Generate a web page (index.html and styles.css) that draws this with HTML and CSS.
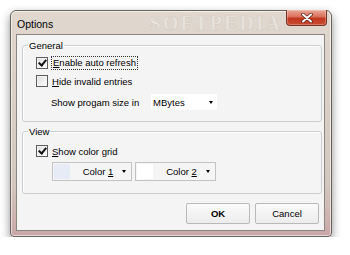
FILE: index.html
```html
<!DOCTYPE html>
<html lang="en">
<head>
  <meta charset="UTF-8" />
  <title>Options</title>
  <link rel="stylesheet" href="styles.css">
</head>
<body>

<div class="window">
  <div class="titlebar">
    <span class="title">Options</span>
    <span class="wm">SOFTPEDIA</span>
    <button class="close" title="Close">
      <svg width="14" height="10" viewBox="0 0 14 10">
        <path d="M3 1.5 L11 8.5 M11 1.5 L3 8.5" stroke="#5a2418" stroke-width="3.6" stroke-linecap="round" />
        <path d="M3 1.5 L11 8.5 M11 1.5 L3 8.5" stroke="#fff" stroke-width="2" stroke-linecap="round" />
      </svg>
    </button>
  </div>

  <div class="client">
    <div class="group general">
      <div class="group-title">General</div>
      <label class="row check">
        <span class="box checked"></span>
        <span class="focus"><u>E</u>nable auto refresh</span>
      </label>
      <label class="row check">
        <span class="box"></span>
        <span><u>H</u>ide invalid entries</span>
      </label>
      <div class="row size-row">
        <span class="size-label">Show progam size in</span>
        <div class="combo">
          <span class="combo-text">MBytes</span>
          <span class="arrow"></span>
        </div>
      </div>
    </div>

    <div class="group view">
      <div class="group-title">View</div>
      <label class="row check">
        <span class="box checked"></span>
        <span><u>S</u>how color grid</span>
      </label>
      <div class="color-row">
        <div class="color-btn">
          <span class="swatch swatch-1"></span>
          <span class="color-text">Color <u>1</u></span>
          <span class="arrow"></span>
        </div>
        <div class="color-btn">
          <span class="swatch swatch-2"></span>
          <span class="color-text">Color <u>2</u></span>
          <span class="arrow"></span>
        </div>
      </div>
    </div>

    <div class="buttons">
      <button class="btn btn-ok">OK</button>
      <button class="btn">Cancel</button>
    </div>
  </div>
</div>

</body>
</html>
```

FILE: styles.css
```css
body {
  margin: 0;
  padding: 10px 0 0 10px;
  background: #fff;
  font-family: "Liberation Sans", Arial, sans-serif;
  font-size: 9.5px;
  color: #000;
}

.window {
  width: 322px;
  height: 227px;
  box-sizing: border-box;
  border: 1px solid #6a635b;
  border-radius: 6px 6px 4px 4px;
  background: linear-gradient(to bottom, #e0d8cf 0%, #d8cfc5 40%, #d3c8be 75%, #cdb3b1 92%, #c8a6a8 100%);
  box-shadow: 0 4px 10px rgba(0,0,0,0.45), inset 0 0 0 1px rgba(255,255,255,0.55);
  display: flex;
  flex-direction: column;
}

.titlebar {
  height: 23px;
  display: flex;
  align-items: flex-start;
  flex-shrink: 0;
}

.title {
  margin: 7px 0 0 6px;
  font-size: 10.5px;
  line-height: 13px;
}

.wm {
  flex: 1;
  margin-top: 2px;
  text-align: right;
  padding-right: 4px;
  font-family: "Liberation Serif", serif;
  font-weight: bold;
  font-size: 20px;
  line-height: 21px;
  letter-spacing: 2px;
  color: rgba(255,255,255,0.3);
  -webkit-text-stroke: 0.5px rgba(120,110,100,0.2);
  white-space: nowrap;
}

.close {
  width: 41px;
  height: 16px;
  margin: -1px 4px 0 0;
  padding: 0;
  flex-shrink: 0;
  border: 1px solid #7a3526;
  border-top: none;
  border-radius: 0 0 4px 4px;
  background: linear-gradient(to bottom, #e9a997 0%, #d9705b 45%, #c1381f 55%, #c94d33 100%);
  display: flex;
  align-items: center;
  justify-content: center;
  box-shadow: inset 0 0 0 1px rgba(255,255,255,0.25);
}

.client {
  margin: 0 6px 5px 5px;
  flex: 1;
  background: #f4f4f4;
  border: 1px solid #8c8680;
  padding: 0 2px 0 5px;
}

.group {
  border: 1px solid #c9cfd3;
  border-radius: 3px;
  box-shadow: inset 1px 1px 0 #fff;
}

.general {
  margin-top: 10px;
  padding: 0 0 11px 13px;
}

.view {
  margin-top: 9px;
  padding: 0 0 12px 13px;
}

.group-title {
  width: fit-content;
  margin: -7px 0 0 -8px;
  padding: 0 1px;
  line-height: 13px;
  background: #f4f4f4;
}

.row {
  display: flex;
  align-items: center;
  height: 18px;
}

.general .row:first-of-type {
  margin-top: 2px;
}

.view .row {
  margin-top: 4px;
}

.box {
  width: 10px;
  height: 10px;
  border: 1px solid #5c5c5c;
  background: linear-gradient(135deg, #dcdcdc, #ffffff);
  box-shadow: inset 0 0 0 1px #f4f4f4;
  margin-right: 4px;
  position: relative;
}

.box.checked::after {
  content: "";
  position: absolute;
  left: 3px;
  top: 0;
  width: 3px;
  height: 6px;
  border: solid #111;
  border-width: 0 2px 2px 0;
  transform: rotate(40deg);
}

.focus {
  outline: 1px dotted #333;
  padding: 0 1px;
  line-height: 12px;
}

.size-row {
  margin-top: 4px;
  height: 16px;
  padding-left: 15px;
}

.size-label {
  width: 100px;
}

.combo {
  width: 66px;
  height: 16px;
  background: #fff;
  display: flex;
  align-items: center;
  justify-content: space-between;
  padding: 0 4px 0 2px;
  box-sizing: border-box;
}

.arrow {
  width: 0;
  height: 0;
  border-left: 2.5px solid transparent;
  border-right: 2.5px solid transparent;
  border-top: 3px solid #000;
}

.color-row {
  display: flex;
  gap: 3px;
  margin-top: 2px;
  padding-left: 16px;
}

.color-btn {
  width: 80px;
  height: 19px;
  box-sizing: border-box;
  border: 1px solid #c3c3c3;
  background: #f5f5f5;
  display: flex;
  align-items: center;
  padding: 1px 5px 1px 1px;
}

.color-btn + .color-btn {
  width: 81px;
}

.swatch {
  width: 16px;
  height: 100%;
}

.swatch-1 {
  background: #e7ebf6;
}

.swatch-2 {
  background: #fff;
}

.color-text {
  flex: 1;
  text-align: center;
  padding-left: 4px;
}

.buttons {
  display: flex;
  justify-content: flex-end;
  gap: 5px;
  margin-top: 9px;
  padding-right: 3px;
}

.btn {
  width: 64px;
  height: 21px;
  padding: 0;
  border: 1px solid #b9b9b9;
  border-radius: 2px;
  background: linear-gradient(to bottom, #fafafa, #ececec);
  font-family: "Liberation Sans", Arial, sans-serif;
  font-size: 9.5px;
  color: #000;
}

.btn-ok {
  font-weight: bold;
}
```
